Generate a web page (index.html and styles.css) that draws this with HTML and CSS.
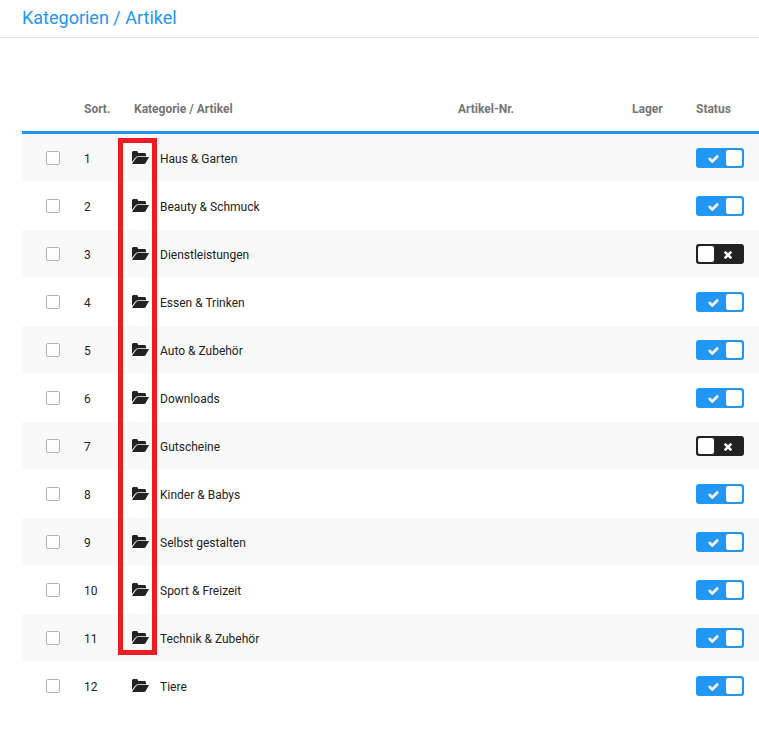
FILE: index.html
```html
<!DOCTYPE html>
<html lang="de">
<head>
<meta charset="utf-8">
<title>Kategorien / Artikel</title>
<link rel="stylesheet" href="styles.css">
</head>
<body>
<header class="page-header"><h1>Kategorien / Artikel</h1></header>
<main class="list">
  <div class="row head">
    <span></span><span>Sort.</span><span class="head-category">Kategorie / Artikel</span><span>Artikel-Nr.</span><span>Lager</span><span>Status</span>
  </div>
  <div id="rows"></div>
  <div class="marker"></div>
</main>
<svg width="0" height="0" class="defs">
  <symbol id="folder" viewBox="0 0 17 13"><path d="M0 11V1L1 0H5L6 1V2H13L14 3V5.200H6Q4.200 5.200 3 6.900Z"/><path d="M.2 12.600 4 7.200Q4.800 6.100 6.200 6.100H17L13.500 12.200Q13 13 12 13H.5Z"/></symbol>
  <symbol id="check" viewBox="121 334 1550 1188"><path d="M1671 566q0 40-28 68l-724 724-136 136q-28 28-68 28t-68-28l-136-136-362-362q-28-28-28-68t28-68l136-136q28-28 68-28t68 28l294 295 656-657q28-28 68-28t68 28l136 136q28 28 28 68z"/></symbol>
  <symbol id="times" viewBox="302 366 1188 1188"><path d="M1490 1322q0 40-28 68l-136 136q-28 28-68 28t-68-28l-294-294-294 294q-28 28-68 28t-68-28l-136-136q-28-28-28-68t28-68l294-294-294-294q-28-28-28-68t28-68l136-136q28-28 68-28t68 28l294 294 294-294q28-28 68-28t68 28l136 136q28 28 28 68t-28 68l-294 294 294 294q28 28 28 68z"/></symbol>
</svg>
<script src="rows.js"></script>
</body>
</html>
```
FILE: styles.css
```css
* { box-sizing: border-box; }
body {
  margin: 0;
  height: 731px;
  overflow: hidden;
  background: #fff;
  color: #222;
  font: 12px/20px Roboto, sans-serif;
}
.page-header {
  height: 38px;
  padding: 6px 22px 0;
  border-bottom: 1px solid #e0e0e0;
}
h1 {
  margin: 0;
  font-size: 18px;
  line-height: 24px;
  font-weight: 400;
  color: #2196f3;
}
.list {
  position: relative;
  margin: 46px 0 0 22px;
}
.row {
  display: grid;
  grid-template-columns: 62px 48px 326px 174px 64px 1fr;
  align-items: center;
  height: 48px;
}
.row.head {
  height: 50px;
  padding-top: 2px;
  border-bottom: 3px solid #2196f3;
  color: #757575;
  font-weight: 700;
}
.head-category { padding-left: 2px; }
.item:nth-child(odd) { background: #f9f9f9; }
.item > span { padding-top: 1px; }
.check {
  width: 14px;
  height: 14px;
  margin-left: 24px;
  border: 1px solid #b3b3b3;
  border-radius: 2px;
  background: #fff;
}
.category {
  display: flex;
  align-items: center;
  gap: 11px;
}
.folder {
  width: 17px;
  height: 13px;
  margin-top: -2px;
  fill: #222;
}
.toggle {
  display: flex;
  align-items: center;
  justify-content: space-between;
  width: 48px;
  height: 20px;
  padding: 0 2px 0 11.5px;
  border-radius: 3px;
  background: #2196f3;
}
.toggle svg { width: 11px; height: 8px; margin-top: 2px; fill: #fff; }
.knob {
  width: 16px;
  height: 16px;
  border-radius: 2px;
  background: #fff;
}
.toggle.off {
  flex-direction: row-reverse;
  padding: 0 12px 0 2px;
  background: #222;
}
.toggle.off svg { width: 8px; height: 8px; }
.marker {
  position: absolute;
  left: 96px;
  top: 54px;
  width: 39px;
  height: 517px;
  border: 5px solid #ed1c24;
}
.defs { position: absolute; }
```
FILE: rows.js
```js
const categories = [
  ["Haus & Garten", true],
  ["Beauty & Schmuck", true],
  ["Dienstleistungen", false],
  ["Essen & Trinken", true],
  ["Auto & Zubehör", true],
  ["Downloads", true],
  ["Gutscheine", false],
  ["Kinder & Babys", true],
  ["Selbst gestalten", true],
  ["Sport & Freizeit", true],
  ["Technik & Zubehör", true],
  ["Tiere", true]
];
document.getElementById("rows").innerHTML = categories.map(([name, on], i) => `
  <div class="row item">
    <div class="check"></div>
    <span>${i + 1}</span>
    <span class="category"><svg class="folder"><use href="#folder"/></svg>${name.replace("&", "&amp;")}</span>
    <span></span><span></span>
    <div class="toggle ${on ? "" : "off"}"><svg><use href="#${on ? "check" : "times"}"/></svg><div class="knob"></div></div>
  </div>`).join("");
```
